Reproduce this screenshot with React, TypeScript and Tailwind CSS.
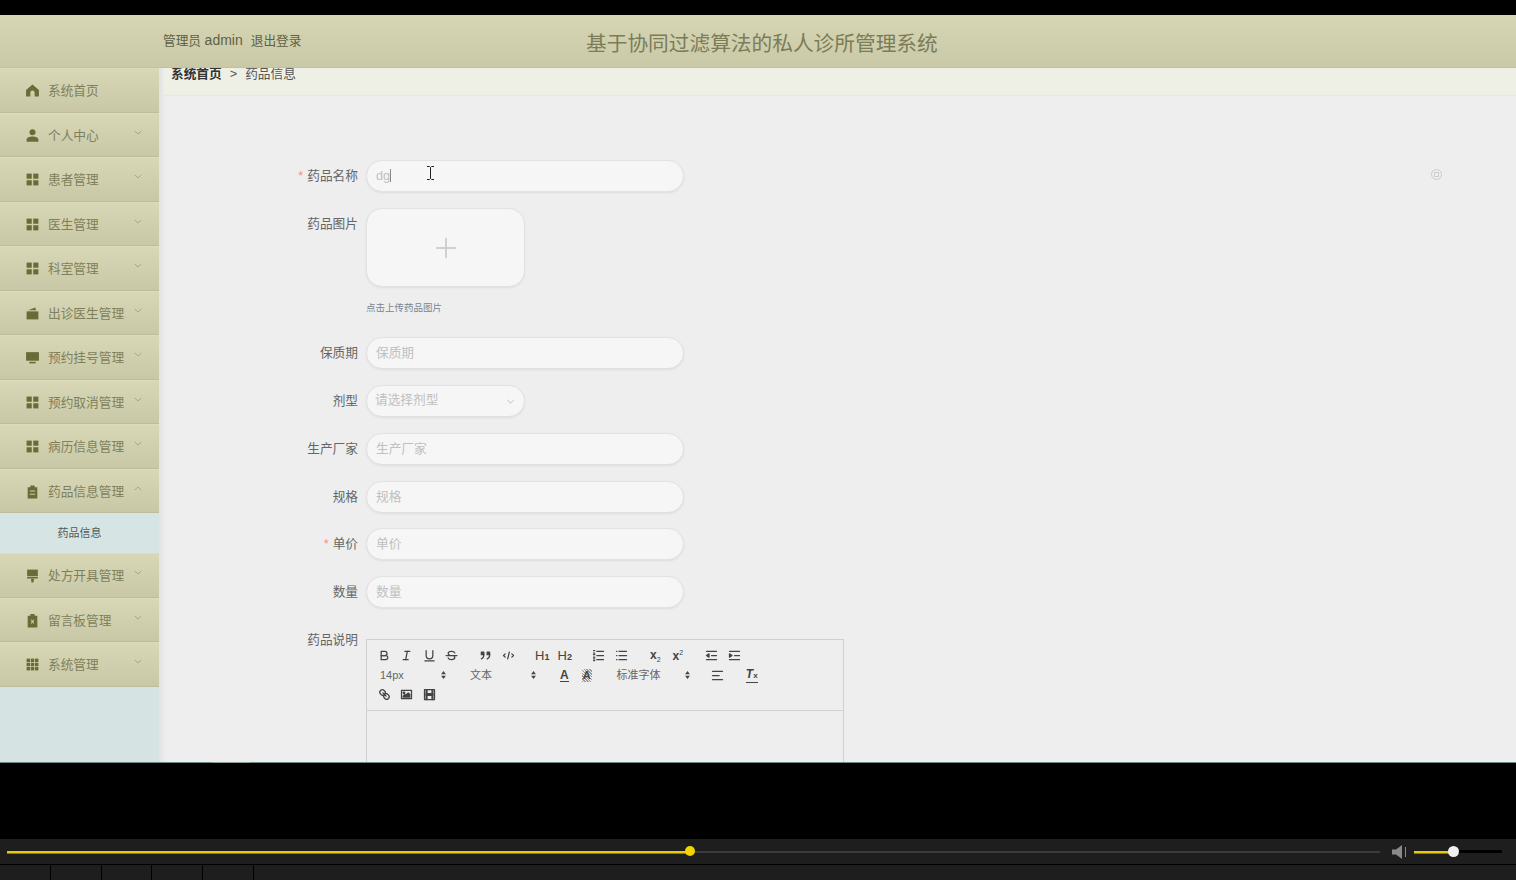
import React from "react";

const FONT = "[font-family:'Liberation_Sans','Noto_Sans_CJK_SC',sans-serif]";

const I = ({ children }: { children: React.ReactNode }) => (
  <svg viewBox="0 0 14 14" className="w-[15px] h-[15px] fill-[#6b6b38]">{children}</svg>
);

const Home = () => <I><path d="M7 1.500 1 6.500v6h4V9a2 2 0 0 1 4 0v3.500h4v-6z" /></I>;
const User = () => <I><circle cx="7" cy="4" r="2.800" /><path d="M1.500 12.800v-1.800c0-2 2.500-3 5.500-3s5.500 1 5.500 3v1.800z" /></I>;
const Grid = () => <I><rect x="1.500" y="1.500" width="4.800" height="4.800" /><rect x="7.700" y="1.500" width="4.800" height="4.800" /><rect x="1.500" y="7.700" width="4.800" height="4.800" /><rect x="7.700" y="7.700" width="4.800" height="4.800" /></I>;
const Wallet = () => <I><path d="M1.500 5h11v7.500h-11z" /><path d="M3 4 9.500 1.500 10.500 4z" /></I>;
const Monitor = () => <I><rect x="1" y="2" width="12" height="8" /><rect x="4" y="11" width="6" height="1.500" /></I>;
const Clip = () => <I><path fillRule="evenodd" d="M5 1.500h4V3h2.500v10.500h-9V3H5zM4.500 6v1h5V6zm0 3v1h5V9z" /></I>;
const Brush = () => <I><rect x="2" y="1.500" width="10" height="6" /><rect x="2" y="8.200" width="10" height="1.600" /><path d="M5.500 10h3l-.6 3.500H6.100z" /></I>;
const ClipX = () => <I><path fillRule="evenodd" d="M5 1h4v1.500h2.500v11h-9v-11H5zM5.400 6.200 6.300 8 5.400 9.800h1L7 8.700l.6 1.100h1L7.700 8l.9-1.800h-1L7 7.300l-.6-1.100z" /></I>;
const Apps = () => <I>{[1.5, 5.4, 9.3].flatMap((y) => [1.5, 5.4, 9.3].map((x) => <rect key={`${x}-${y}`} x={x} y={y} width="3.200" height="3.200" />))}</I>;

const Chevron = ({ up }: { up?: boolean }) => (
  <svg viewBox="0 0 10 6" className="w-[8px] h-[5px] fill-none stroke-[#9c9c7c] stroke-1">
    <path d={up ? "M1 5 5 1l4 4" : "M1 1l4 4 4-4"} />
  </svg>
);

const MenuItem = ({ icon, label, chevron, up }: { icon: React.ReactNode; label: string; chevron?: boolean; up?: boolean }) => (
  <div className="h-[44.5px] flex items-center pl-[25px] bg-gradient-to-b from-[#d8d8b6] to-[#c8c8a6] border-b border-[#bdbd9c] shadow-[inset_0_1px_0_#dcdcbc]">
    <span className="w-[23px] flex items-center mt-[2px]">{icon}</span>
    <span className="text-[12.7px] text-[#7f7f5c] w-[86px] mt-[4px]">{label}</span>
    {chevron && <span className="-mt-[4px] flex"><Chevron up={up} /></span>}
  </div>
);

const Label = ({ text, req }: { text: string; req?: boolean }) => (
  <div className="w-[202px] h-8 pr-2 text-right text-[12.7px] text-[#666666] leading-[33px] shrink-0">
    {req && <span className="text-[#f78d8d] mr-1">*</span>}
    {text}
  </div>
);

const Field = ({ label, req, ph, mb = "mb-4" }: { label: string; req?: boolean; ph: string; mb?: string }) => (
  <div className={`flex ${mb}`}>
    <Label text={label} req={req} />
    <div className="w-[318px] h-8 rounded-2xl bg-[#f6f6f6] border border-[#e2e2e2] shadow-[0_1px_2px_#dddddd] px-[9px] text-[12.7px] leading-[30px] text-[#c0c0c0]">{ph}</div>
  </div>
);

const Q = ({ children }: { children: React.ReactNode }) => (
  <span className="w-[22.5px] h-[19px] flex items-center justify-center shrink-0">
    <svg viewBox="0 0 18 18" className="w-[15px] h-[15px] fill-none stroke-[#444444] stroke-[1.5] [stroke-linecap:round] [stroke-linejoin:round]">{children}</svg>
  </span>
);

const T = ({ children }: { children: React.ReactNode }) => (
  <span className="w-[22.5px] h-[19px] flex items-center justify-center shrink-0 text-[#444444]">{children}</span>
);

const Group = ({ children }: { children: React.ReactNode }) => <span className="flex mr-[11.500px]">{children}</span>;

const Picker = ({ label, w }: { label: string; w: string }) => (
  <span className={`${w} h-[19px] flex items-center justify-between pl-[7px] pr-[6px] text-[11px] text-[#666666] mr-[11px] shrink-0`}>
    {label}
    <svg viewBox="0 0 6 10" className="w-[5px] h-[8px] fill-[#444444]"><path d="M3 0 6 4H0zM3 10 0 6h6z" /></svg>
  </span>
);

const lines = (ys: number[], x1: number, x2: number) => ys.map((y) => <line key={y} x1={x1} x2={x2} y1={y} y2={y} />);

const menu1: [React.ReactNode, string, boolean][] = [
  [<Home />, "系统首页", false],
  [<User />, "个人中心", true],
  [<Grid />, "患者管理", true],
  [<Grid />, "医生管理", true],
  [<Grid />, "科室管理", true],
  [<Wallet />, "出诊医生管理", true],
  [<Monitor />, "预约挂号管理", true],
  [<Grid />, "预约取消管理", true],
  [<Grid />, "病历信息管理", true],
];

export default function App() {
  return (
    <div className={`relative w-[1516px] h-[880px] overflow-hidden bg-black ${FONT}`}>
      <div className="h-[15px]" />
      <header className="h-[53px] flex items-center bg-gradient-to-b from-[#d6d6b4] to-[#c9c9a7] border-b border-[#c0c09e]">
        <div className="w-[586px] pl-[163px] text-[12.7px] text-[#5f5f45] -mt-[1px]">
          <span>管理员 <span className="text-[14px]">admin</span></span>
          <span className="ml-2">退出登录</span>
        </div>
        <div className="text-[20.700px] text-[#7c7c56] mt-[6px]">基于协同过滤算法的私人诊所管理系统</div>
      </header>

      <div className="flex h-[694px] overflow-hidden">
        <aside className="w-[159px] shrink-0 bg-[#d5e3e3]">
          {menu1.map(([ic, l, c]) => <MenuItem key={l} icon={ic} label={l} chevron={c} />)}
          <MenuItem icon={<Clip />} label="药品信息管理" chevron up />
          <div className="h-10 flex items-center justify-center text-[11px] text-[#4f5a5a] bg-[#d6e4e4]">药品信息</div>
          <MenuItem icon={<Brush />} label="处方开具管理" chevron />
          <MenuItem icon={<ClipX />} label="留言板管理" chevron />
          <MenuItem icon={<Apps />} label="系统管理" chevron />
        </aside>

        <main className="flex-1 bg-[#eeeeee] pl-[5px] bg-gradient-to-r from-[#e2e2e2] from-0% to-[#eeeeee] to-[0.5%] overflow-hidden">
          <div className="h-[28px] bg-[#eef0e6] border-b border-[#e7e8e0] pl-[7px] text-[12.7px] leading-[12px] text-[#555555]">
            <span className="font-bold text-[#333333]">系统首页</span>
            <span className="mx-[8px]">&gt;</span>
            <span>药品信息</span>
          </div>

          <div className="pt-[64px]">
            <Field label="药品名称" req ph="dg" />
            <div className="flex">
              <Label text="药品图片" />
              <div className="w-[159px] h-[79px] rounded-2xl bg-[#f6f6f6] border border-[#e2e2e2] shadow-[0_1px_2px_#dddddd] flex items-center justify-center">
                <svg viewBox="0 0 22 22" className="w-[22px] h-[22px] stroke-[#c2c8c4] stroke-[1.5]"><path d="M11 1v20M1 11h20" /></svg>
              </div>
            </div>
            <div className="ml-[202px] mt-[14px] mb-[22px] text-[9.500px] leading-[14px] text-[#7a8590]">点击上传药品图片</div>
            <Field label="保质期" ph="保质期" />
            <div className="flex mb-4">
              <Label text="剂型" />
              <div className="w-[159px] h-8 rounded-2xl bg-[#f6f6f6] border border-[#e2e2e2] shadow-[0_1px_2px_#dddddd] pl-2 pr-[9px] flex items-center justify-between text-[12.7px] text-[#c0c0c0]">
                请选择剂型
                <svg viewBox="0 0 10 6" className="w-[9px] h-[5px] fill-none stroke-[#b5b5b5]"><path d="M1 1l4 4 4-4" /></svg>
              </div>
            </div>
            <Field label="生产厂家" ph="生产厂家" />
            <Field label="规格" ph="规格" mb="mb-[15px]" />
            <Field label="单价" req ph="单价" />
            <Field label="数量" ph="数量" />

            <div className="flex">
              <Label text="药品说明" />
              <div className="mt-[15px] w-[478px] h-[200px] border border-[#d0d0d0]">
                <div className="h-[71px] border-b border-[#d0d0d0] px-[6px] pt-[6px]">
                  <div className="flex">
                    <Group>
                      <Q><path d="M5,4H9.500A2.500,2.500,0,0,1,12,6.500v0A2.500,2.500,0,0,1,9.500,9H5V4Z" /><path d="M5,9h5.500A2.500,2.500,0,0,1,13,11.500v0A2.500,2.500,0,0,1,10.500,14H5V9Z" /></Q>
                      <Q><line x1="7" x2="13" y1="4" y2="4" /><line x1="5" x2="11" y1="14" y2="14" /><line x1="8" x2="10" y1="14" y2="4" /></Q>
                      <Q><path d="M5,3V9a4,4,0,0,0,4,4H9a4,4,0,0,0,4-4V3" /><line x1="3.500" x2="14.500" y1="15.500" y2="15.500" /></Q>
                      <Q><line x1="15.500" x2="2.500" y1="9" y2="9" /><path d="M13 6C12.500 4.500 11 4 9 4 6.500 4 5 5 5 6.500 5 8 6 8.500 7.500 9M5 12c.5 1.500 2 2 4 2 2.500 0 4-1 4-2.500 0-.8-.3-1.500-1-2" /></Q>
                    </Group>
                    <Group>
                      <Q><rect className="fill-[#444444]" height="3" width="3" x="4" y="5" /><rect className="fill-[#444444]" height="3" width="3" x="11" y="5" /><path d="M7,8c0,4-3,5-3,5" /><path d="M14,8c0,4-3,5-3,5" /></Q>
                      <Q><polyline points="5 7 3 9 5 11" /><polyline points="13 7 15 9 13 11" /><line x1="10" x2="8" y1="5" y2="13" /></Q>
                    </Group>
                    <Group>
                      <T><span className="text-[13px]">H<span className="text-[9px] font-bold">1</span></span></T>
                      <T><span className="text-[13px]">H<span className="text-[9px] font-bold">2</span></span></T>
                    </Group>
                    <Group>
                      <Q>{lines([4, 9, 14], 7, 15)}{lines([3, 6, 8, 11, 13, 15], 3, 4.5)}</Q>
                      <Q>{lines([4, 9, 14], 6, 15)}{lines([4, 9, 14], 3, 3.5)}</Q>
                    </Group>
                    <Group>
                      <T><span className="text-[12px] font-bold">x<span className="text-[7px] align-sub font-normal">2</span></span></T>
                      <T><span className="text-[12px] font-bold">x<span className="text-[7px] align-super font-normal">2</span></span></T>
                    </Group>
                    <Group>
                      <Q>{lines([4, 14], 3, 15)}{lines([9], 9, 15)}<polygon className="fill-[#444444]" points="6 7 6 11 3 9" /></Q>
                      <Q>{lines([4, 14], 3, 15)}{lines([9], 9, 15)}<polygon className="fill-[#444444]" points="3 7 3 11 6 9" /></Q>
                    </Group>
                  </div>
                  <div className="flex mt-[0.500px]">
                    <Picker label="14px" w="w-[79px]" />
                    <Picker label="文本" w="w-[79px]" />
                    <Group>
                      <T><span className="text-[12px] leading-[12px] border-b border-[#444444] font-bold">A</span></T>
                      <T><span className="text-[11px] leading-[13px] px-[1px] bg-[repeating-linear-gradient(45deg,#999999_0,#999999_1px,#eeeeee_1px,#eeeeee_2px)] font-bold">A</span></T>
                    </Group>
                    <Picker label="标准字体" w="w-[86px]" />
                    <Group>
                      <Q>{lines([4], 3, 15)}{lines([9], 3, 11)}{lines([14], 3, 15)}</Q>
                    </Group>
                    <Group>
                      <T><span className="text-[12px] italic font-bold border-b border-[#444444] leading-[12px]">T<span className="text-[8px] not-italic">x</span></span></T>
                    </Group>
                  </div>
                  <div className="flex">
                    <Q><line x1="7" x2="11" y1="7" y2="11" /><path d="M8.900,4.577a3.476,3.476,0,0,1,.36,4.679A3.476,3.476,0,0,1,4.577,8.900C3.185,7.500,2.035,6.400,4.217,4.217S7.500,3.185,8.900,4.577Z" /><path d="M13.423,9.100a3.476,3.476,0,0,0-4.679-.36,3.476,3.476,0,0,0,.36,4.679c1.392,1.392,2.500,2.542,4.679.36S14.815,10.500,13.423,9.100Z" /></Q>
                    <Q><rect height="10" width="12" x="3" y="4" /><circle className="fill-[#444444]" cx="6" cy="7" r="1" /><polyline className="fill-[#444444]" points="5 12 5 11 7 9 8 10 11 7 13 9 13 12 5 12" /></Q>
                    <Q><rect height="12" width="12" x="3" y="3" /><rect className="fill-[#444444]" height="12" width="1" x="5" y="3" /><rect className="fill-[#444444]" height="12" width="1" x="12" y="3" /><rect className="fill-[#444444]" height="2" width="8" x="5" y="8" /></Q>
                  </div>
                </div>
              </div>
            </div>
          </div>
        </main>
      </div>

      <div className="h-[76px] border-t border-[#6b8a8a]" />

      <footer className="absolute left-0 right-0 bottom-0 h-[41px] bg-[#1e1e1e]">
        <div className="h-[26px] flex items-center pl-[7px] border-b border-black">
          <div className="w-[683px] h-[2px] bg-[#e6ce00] shadow-[0_1px_0_#8a7c00]" />
          <div className="w-[690px] h-[2px] bg-[#3c3c3c]" />
          <svg viewBox="0 0 16 14" className="ml-[12px] w-[16px] h-[14px] fill-[#8a8a8a]"><path d="M0 4.500h4L10 0v14L4 9.500H0z" /><rect x="13" y="2" width="1" height="10" /></svg>
          <div className="ml-[6px] w-[39px] h-[2px] bg-[#e6ce00] shadow-[0_1px_0_#8a7c00]" />
          <div className="w-[49px] h-[3px] bg-black" />
        </div>
        <div className="flex h-[15px]">
          {[0, 1, 2, 3, 4].map((i) => <div key={i} className="w-[50.800px] border-r border-black" />)}
        </div>
        <span className="absolute left-[685px] top-[7px] w-[10px] h-[10px] rounded-full bg-[#f2d500]" />
        <span className="absolute left-[1448px] top-[7px] w-[11px] h-[11px] rounded-full bg-[#f0f0f0]" />
      </footer>

      {/* I-beam cursor over the field */}
      <svg viewBox="0 0 7 14" className="absolute left-[427px] top-[166px] w-[7px] h-[14px] fill-none stroke-[#222222]"><path d="M0 .5h2.500L3.500 1.500 4.500.5H7M3.500 1.500v11M0 13.500h2.500l1-1 1 1H7" /></svg>
      {/* text caret */}
      <span className="absolute left-[390px] top-[169px] w-px h-[13px] bg-[#888888]" />
      {/* small floating widget */}
      <span className="absolute left-[1431px] top-[169px] w-[11px] h-[11px] rounded-full border border-[#cccccc] flex items-center justify-center">
        <span className="w-[5px] h-[5px] border border-[#cccccc]" />
      </span>
      {/* sliver at the lower edge of the page */}
      <span className="absolute left-[212px] top-[762px] w-[38px] h-px bg-[#8a9a9a]" />
    </div>
  );
}
